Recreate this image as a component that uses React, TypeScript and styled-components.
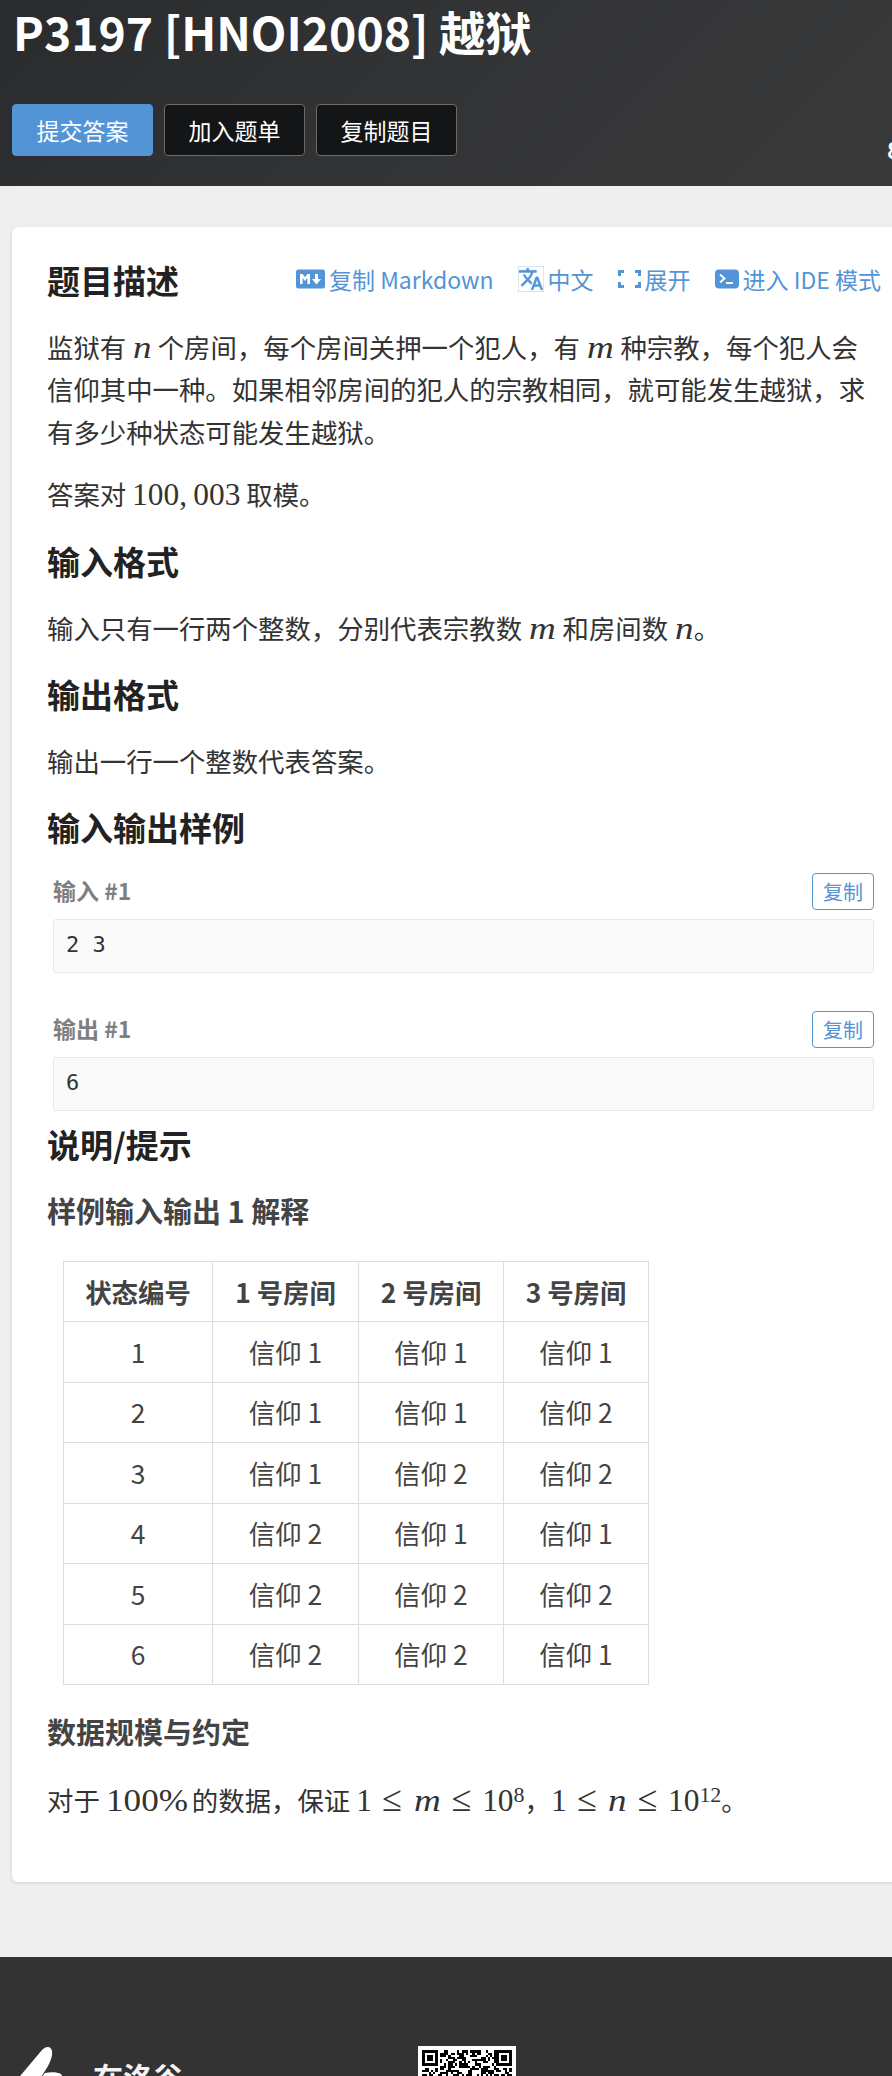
import React from 'react';
import styled, { createGlobalStyle } from 'styled-components';
import { MdTranslate } from 'react-icons/md';

const Global = createGlobalStyle`
  html, body { margin: 0; padding: 0; background: #efefef; }
  body { font-family: "Noto Sans CJK SC", "Noto Sans", sans-serif; color: #333; }
`;

const Viewport = styled.div`
  width: 892px;
  height: 2076px;
  overflow: hidden;
`;
const Page = styled.div`
  width: 928px;
`;
const Header = styled.header`
  height: 186px;
  box-sizing: border-box;
  padding: 0 0 0 12px;
  background: linear-gradient(135deg, #2a2b2d 0%, #333436 50%, #3a3a3a 100%);
  display: flex;
  flex-direction: column;
`;
const Title = styled.h1`
  margin: 0;
  padding: 0;
  height: 104px;
  margin-left: 1px;
  font-size: 46.3px;
  line-height: 62px;
  font-weight: 700;
  color: #fff;
  white-space: nowrap;
`;
const ButtonRow = styled.div`
  display: flex;
  gap: 11px;
`;
const HeadButton = styled.button<{ $primary?: boolean }>`
  width: 141px;
  height: 52px;
  box-sizing: border-box;
  border-radius: 4px;
  border: 1px solid ${p => (p.$primary ? '#5294d6' : '#6b6b6b')};
  background: ${p => (p.$primary ? '#5294d6' : '#141516')};
  color: #fff;
  font-family: inherit;
  font-size: 23px;
  padding: 0;
  line-height: 1;
`;
const Stat = styled.span`
  margin-left: 419px;
  align-self: flex-end;
  color: #fff;
  font-size: 23px;
  font-weight: 700;
  line-height: 34px;
  margin-bottom: -10px;
`;
const Main = styled.main`
  padding: 41px 0 75px 12px;
`;
const Card = styled.section`
  width: 916px;
  box-sizing: border-box;
  background: #fff;
  border-radius: 6px;
  box-shadow: 0 1px 4px rgba(0, 0, 0, 0.12);
  padding: 31px 35px 40px;
`;
const HeadRow = styled.div`
  display: flex;
  justify-content: space-between;
  align-items: center;
  height: 46px;
  margin-bottom: 22px;
  padding-right: 12px;
`;
const H2 = styled.h2<{ $top?: number }>`
  margin: ${p => p.$top ?? 23}px 0 24px;
  font-size: 33px;
  line-height: 44px;
  font-weight: 700;
  color: #222;
`;
const HeadTitle = styled(H2)`
  margin: -3px 0 0;
`;
const Actions = styled.div`
  display: flex;
  align-items: center;
  gap: 24px;
  margin-top: -5px;
`;
const ActionLink = styled.a`
  display: inline-flex;
  align-items: center;
  gap: 4px;
  color: #5294d6;
  font-size: 23px;
  line-height: 34px;
  white-space: nowrap;
  svg { flex: none; display: block; }
`;
const P = styled.p`
  margin: 20px 0;
  width: 830px;
  font-size: 26.4px;
  line-height: 42.4px;
  color: #333;
`;
const Math = styled.span`
  font-family: "Liberation Serif", "DejaVu Serif", serif;
  font-size: 31.4px;
  line-height: 1;
  white-space: nowrap;
`;
const Var = styled.i<{ $wide?: boolean }>`
  display: inline-block;
  font-style: italic;
  transform: scaleX(1.18);
  transform-origin: left center;
  margin: 0 ${p => (p.$wide ? 5 : 3)}px 0 1px;
`;
const Percent = styled.span`
  display: inline-block;
  transform: scaleX(1.12);
  transform-origin: left center;
  margin-right: 7px;
`;
const Rel = styled.span`
  padding: 0 10.5px;
  font-size: 1.15em;
  line-height: 0;
`;
const Sup = styled.sup`
  font-size: 0.7em;
  line-height: 0;
  vertical-align: 0.42em;
`;
const Samples = styled.div`
  margin: 22px 0 -12px 6px;
  width: 821px;
  display: flex;
  flex-direction: column;
  gap: 38px;
`;
const Sample = styled.div`
  display: flex;
  flex-direction: column;
  gap: 9px;
`;
const SampleHead = styled.div`
  display: flex;
  justify-content: space-between;
  align-items: center;
  height: 37px;
`;
const SampleTitle = styled.span`
  color: #7f7f7f;
  font-size: 23px;
  font-weight: 700;
  margin-top: -3px;
`;
const CopyButton = styled.button`
  width: 62px;
  height: 37px;
  box-sizing: border-box;
  border: 1px solid #5294d6;
  border-radius: 4px;
  background: #fff;
  color: #5294d6;
  font-family: inherit;
  font-size: 20px;
  padding: 0;
  line-height: 1;
`;
const Code = styled.pre`
  margin: 0;
  height: 54px;
  box-sizing: border-box;
  padding: 0 12px;
  background: #fafafa;
  border: 1px solid #e8e8e8;
  border-radius: 3px;
  font-family: "DejaVu Sans Mono", monospace;
  font-size: 22px;
  line-height: 50px;
  color: #333;
`;
const H3 = styled.h3<{ $top: number; $bottom: number }>`
  margin: ${p => p.$top}px 0 ${p => p.$bottom}px;
  font-size: 29px;
  line-height: 40px;
  font-weight: 700;
  color: #444;
`;
const Table = styled.table`
  margin-left: 16px;
  border-collapse: collapse;
  table-layout: fixed;
  width: 581px;
  font-size: 26.4px;
  color: #444;
`;
const Th = styled.th<{ $w: number }>`
  width: ${p => p.$w}px;
  height: 59px;
  padding: 0;
  border: 1px solid #ddd;
  font-weight: 700;
  line-height: 1;
`;
const Td = styled.td`
  height: 59.5px;
  padding: 0;
  border: 1px solid #ddd;
  text-align: center;
  line-height: 1;
`;
const Footer = styled.footer`
  background: #333;
  height: 300px;
  padding: 89px 0 0 15px;
  box-sizing: border-box;
  display: flex;
  align-items: flex-start;
`;
const Brand = styled.div`
  display: flex;
  align-items: flex-start;
  width: 403px;
  flex: none;
`;
const BrandText = styled.span`
  margin-left: 18px;
  margin-top: 10px;
  color: #f4f4f4;
  font-size: 30px;
  font-weight: 700;
  line-height: 40px;
`;

const blue = '#5294d6';

const MarkdownIcon = () => (
  <svg width="29" height="20" viewBox="0 0 29 20">
    <rect width="29" height="19" y="0.5" rx="2.5" fill={blue} />
    <path d="M4 15V5h2.6l2.4 3.2L11.4 5H14v10h-2.6V9l-2.4 3-2.4-3v6z" fill="#fff" />
    <path d="M19 5h3v5h3l-4.5 5.5L16 10h3z" fill="#fff" />
  </svg>
);
const ExpandIcon = () => (
  <svg width="23" height="18" viewBox="0 0 23 18" fill="none" stroke={blue} strokeWidth="3">
    <path d="M1.5 6V1.5H6M17 1.5h4.5V6M21.5 12v4.5H17M6 16.5H1.5V12" />
  </svg>
);
const TerminalIcon = () => (
  <svg width="24" height="20" viewBox="0 0 24 20">
    <rect width="24" height="19" y="0.5" rx="4" fill={blue} />
    <path d="M5 5.5l4.5 4-4.5 4" fill="none" stroke="#fff" strokeWidth="2" />
    <path d="M11 14h7" stroke="#fff" strokeWidth="2" />
  </svg>
);
const Logo = () => (
  <svg width="60" height="60" viewBox="0 0 60 60">
    <path d="M27 4C31 0 36 0 37 5c1 6-3 14-9 23L18 42H-5z" fill="#fff" />
    <path d="M30 27c6-1 12-1 16 1l3 6H24z" fill="#fff" />
  </svg>
);

const QR_SIZE = 41;
const qrCells = (() => {
  const cells: [number, number][] = [];
  const finder = (fx: number, fy: number, x: number, y: number) => {
    const dx = x - fx;
    const dy = y - fy;
    if (dx < 0 || dy < 0 || dx > 7 || dy > 7) return null;
    if (dx === 7 || dy === 7) return false;
    const edge = dx === 0 || dy === 0 || dx === 6 || dy === 6;
    const core = dx >= 2 && dx <= 4 && dy >= 2 && dy <= 4;
    return edge || core;
  };
  let seed = 20081;
  for (let y = 0; y < QR_SIZE; y++) {
    for (let x = 0; x < QR_SIZE; x++) {
      seed = (seed * 1103515245 + 12345) % 2147483648;
      const a = finder(0, 0, x, y);
      const b = finder(QR_SIZE - 7, 0, x, y);
      const fixed = a !== null ? a : b;
      const on = fixed !== null ? fixed : (seed >> 16) % 100 < 52;
      if (on) cells.push([x, y]);
    }
  }
  return cells;
})();
const Qr = () => (
  <svg width="98" height="98" viewBox="-2 -2 45 45" shapeRendering="crispEdges">
    <rect x="-2" y="-2" width="45" height="45" fill="#fff" />
    {qrCells.map(([x, y]) => (
      <rect key={`${x}-${y}`} x={x} y={y} width="1" height="1" fill="#000" />
    ))}
  </svg>
);

const rows = [
  ['1', '信仰 1', '信仰 1', '信仰 1'],
  ['2', '信仰 1', '信仰 1', '信仰 2'],
  ['3', '信仰 1', '信仰 2', '信仰 2'],
  ['4', '信仰 2', '信仰 1', '信仰 1'],
  ['5', '信仰 2', '信仰 2', '信仰 2'],
  ['6', '信仰 2', '信仰 2', '信仰 1'],
];

export default function App() {
  return (
    <Viewport>
      <Global />
      <Page>
        <Header>
          <Title>P3197 [HNOI2008] 越狱</Title>
          <ButtonRow>
            <HeadButton $primary>提交答案</HeadButton>
            <HeadButton>加入题单</HeadButton>
            <HeadButton>复制题目</HeadButton>
            <Stat>8</Stat>
          </ButtonRow>
        </Header>
        <Main>
          <Card>
            <HeadRow>
              <HeadTitle>题目描述</HeadTitle>
              <Actions>
                <ActionLink><MarkdownIcon />复制 Markdown</ActionLink>
                <ActionLink><MdTranslate size={26} stroke="currentColor" strokeWidth={0.4} />中文</ActionLink>
                <ActionLink><ExpandIcon />展开</ActionLink>
                <ActionLink><TerminalIcon />进入 IDE 模式</ActionLink>
              </Actions>
            </HeadRow>
            <P>
              监狱有 <Math><Var>n</Var></Math> 个房间，每个房间关押一个犯人，有 <Math><Var $wide>m</Var></Math> 种宗教，每个犯人会信仰其中一种。如果相邻房间的犯人的宗教相同，就可能发生越狱，求有多少种状态可能发生越狱。
            </P>
            <P>
              答案对 <Math>100,&thinsp;003</Math> 取模。
            </P>
            <H2>输入格式</H2>
            <P>
              输入只有一行两个整数，分别代表宗教数 <Math><Var $wide>m</Var></Math> 和房间数 <Math><Var>n</Var></Math>。
            </P>
            <H2>输出格式</H2>
            <P>输出一行一个整数代表答案。</P>
            <H2>输入输出样例</H2>
            <Samples>
              <Sample>
                <SampleHead>
                  <SampleTitle>输入 #1</SampleTitle>
                  <CopyButton>复制</CopyButton>
                </SampleHead>
                <Code>2 3</Code>
              </Sample>
              <Sample>
                <SampleHead>
                  <SampleTitle>输出 #1</SampleTitle>
                  <CopyButton>复制</CopyButton>
                </SampleHead>
                <Code>6</Code>
              </Sample>
            </Samples>
            <H2 $top={23}>说明/提示</H2>
            <H3 $top={22} $bottom={31}>样例输入输出 1 解释</H3>
            <Table>
              <thead>
                <tr>
                  <Th $w={148}>状态编号</Th>
                  <Th $w={145}>1 号房间</Th>
                  <Th $w={144}>2 号房间</Th>
                  <Th $w={144}>3 号房间</Th>
                </tr>
              </thead>
              <tbody>
                {rows.map(r => (
                  <tr key={r[0]}>
                    {r.map((c, i) => (
                      <Td key={i}>{c}</Td>
                    ))}
                  </tr>
                ))}
              </tbody>
            </Table>
            <H3 $top={26} $bottom={28}>数据规模与约定</H3>
            <P>
              对于 <Math><Percent>100%</Percent></Math> 的数据，保证 <Math>1<Rel>≤</Rel><Var $wide>m</Var><Rel>≤</Rel>10<Sup>8</Sup></Math>，<Math>1<Rel>≤</Rel><Var>n</Var><Rel>≤</Rel>10<Sup>12</Sup></Math>。
            </P>
          </Card>
        </Main>
        <Footer>
          <Brand>
            <Logo />
            <BrandText>在洛谷</BrandText>
          </Brand>
          <Qr />
        </Footer>
      </Page>
    </Viewport>
  );
}
